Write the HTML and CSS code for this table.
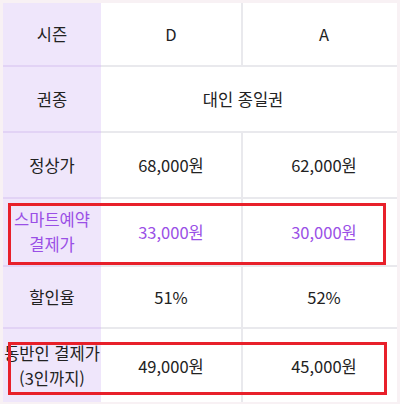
FILE: index.html
```html
<!DOCTYPE html>
<html lang="ko">
<head>
<meta charset="utf-8">
<link rel="stylesheet" href="styles.css">
</head>
<body>
<div class="frame">
  <div class="table">
    <div class="cell head r1">시즌</div>
    <div class="cell c2 r1">D</div>
    <div class="cell c3 r1">A</div>

    <div class="cell head r2">권종</div>
    <div class="cell span r2">대인 종일권</div>

    <div class="cell head r3">정상가</div>
    <div class="cell c2 r3">68,000원</div>
    <div class="cell c3 r3">62,000원</div>

    <div class="cell head r4 purple two">스마트예약<br>결제가</div>
    <div class="cell c2 r4 purple">33,000원</div>
    <div class="cell c3 r4 purple">30,000원</div>

    <div class="cell head r5">할인율</div>
    <div class="cell c2 r5">51%</div>
    <div class="cell c3 r5">52%</div>

    <div class="cell head r6 two last">동반인 결제가<br>(3인까지)</div>
    <div class="cell c2 r6 last">49,000원</div>
    <div class="cell c3 r6 last">45,000원</div>
  </div>
  <div class="mark mark1"></div>
  <div class="mark mark2"></div>
</div>
</body>
</html>
```

FILE: styles.css
```css
html, body {
  margin: 0;
  padding: 0;
  background: #f8f1f4;
  width: 400px;
  height: 404px;
  overflow: hidden;
}
.frame {
  position: relative;
  padding: 3px 3px 0 3px;
  font-family: "Noto Sans CJK KR", "Noto Sans", sans-serif;
  font-size: 16.5px;
  color: #222;
}
.table {
  display: grid;
  grid-template-columns: 98px 142px 154px;
  grid-template-rows: 64px 66px 66px 68px 62px 73px;
  background: #fff;
}
.cell {
  display: flex;
  align-items: center;
  justify-content: center;
  text-align: center;
  border-bottom: 2px solid #e9e9ed;
  box-sizing: border-box;
  white-space: nowrap;
}
.head {
  background: #efe6fb;
  border-bottom-color: #e2d3f5;
}
.c2 {
  border-right: 2px solid #e9e9ed;
}
.c3 {
  padding-left: 8px;
}
.span {
  grid-column: 2 / 4;
  padding-right: 12px;
}
.two {
  line-height: 25px;
}
.purple {
  color: #9a4fe6;
}
.last {
  border-bottom: none;
}
.mark {
  position: absolute;
  border: 3px solid #e8202a;
  box-sizing: border-box;
}
.mark1 {
  left: 8px;
  top: 203px;
  width: 378px;
  height: 62px;
}
.mark2 {
  left: 8px;
  top: 342px;
  width: 379px;
  height: 53px;
}
```
